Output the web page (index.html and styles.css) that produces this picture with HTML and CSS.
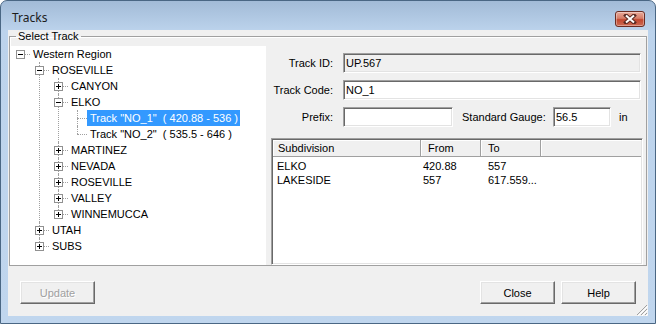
FILE: index.html
```html
<!DOCTYPE html>
<html>
   <head>
      <meta name="viewport" content="width=device-width, initial-scale=1">
      <link rel="stylesheet" href="styles.css">
   </head>
   <body>
      <div class="window">
         <div class="titlebar">
            <span class="title">Tracks</span>
            <span class="closebtn">
               <svg width="14" height="10" viewBox="0 0 14 10">
                  <path d="M3 1.5 L11 8.5 M11 1.5 L3 8.5" stroke="#5a2a22" stroke-width="4" stroke-linecap="square"/>
                  <path d="M3 1.5 L11 8.5 M11 1.5 L3 8.5" stroke="#ffffff" stroke-width="2"/>
               </svg>
            </span>
         </div>
         <div class="client">
            <fieldset class="group">
               <legend>Select Track</legend>
               <div class="group-body">
                  <div class="tree-pane">
                     <ul class="tree">
                        <li>
                           <div class="node"><span class="exp minus"></span><span class="label">Western Region</span></div>
                           <ul>
                              <li>
                                 <div class="node"><span class="exp minus"></span><span class="label">ROSEVILLE</span></div>
                                 <ul>
                                    <li><div class="node"><span class="exp plus"></span><span class="label">CANYON</span></div></li>
                                    <li>
                                       <div class="node"><span class="exp minus"></span><span class="label">ELKO</span></div>
                                       <ul>
                                          <li><div class="node"><span class="exp"></span><span class="label selected">Track "NO_1"  ( 420.88 - 536 )</span></div></li>
                                          <li><div class="node"><span class="exp"></span><span class="label">Track "NO_2"  ( 535.5 - 646 )</span></div></li>
                                       </ul>
                                    </li>
                                    <li><div class="node"><span class="exp plus"></span><span class="label">MARTINEZ</span></div></li>
                                    <li><div class="node"><span class="exp plus"></span><span class="label">NEVADA</span></div></li>
                                    <li><div class="node"><span class="exp plus"></span><span class="label">ROSEVILLE</span></div></li>
                                    <li><div class="node"><span class="exp plus"></span><span class="label">VALLEY</span></div></li>
                                    <li><div class="node"><span class="exp plus"></span><span class="label">WINNEMUCCA</span></div></li>
                                 </ul>
                              </li>
                              <li><div class="node"><span class="exp plus"></span><span class="label">UTAH</span></div></li>
                              <li><div class="node"><span class="exp plus"></span><span class="label">SUBS</span></div></li>
                           </ul>
                        </li>
                     </ul>
                  </div>
                  <div class="detail">
                     <div class="form">
                        <label>Track ID:</label>
                        <input class="field readonly" type="text" value="UP.567" readonly>
                        <label>Track Code:</label>
                        <input class="field" type="text" value="NO_1">
                        <label>Prefix:</label>
                        <div class="inline-row">
                           <input class="field prefix" type="text" value="">
                           <label class="sg-label">Standard Gauge:</label>
                           <input class="field gauge" type="text" value="56.5">
                           <span class="unit">in</span>
                        </div>
                     </div>
                     <div class="listview">
                        <div class="lv-header">
                           <div class="hcell c1">Subdivision</div>
                           <div class="hcell c2">From</div>
                           <div class="hcell c3">To</div>
                           <div class="hcell rest"></div>
                        </div>
                        <div class="lv-rows">
                           <div class="lv-row"><span>ELKO</span><span>420.88</span><span>557</span></div>
                           <div class="lv-row"><span>LAKESIDE</span><span>557</span><span>617.559...</span></div>
                        </div>
                     </div>
                  </div>
               </div>
            </fieldset>
            <div class="footer">
               <button class="btn" disabled>Update</button>
               <span class="spacer"></span>
               <button class="btn">Close</button>
               <button class="btn">Help</button>
            </div>
            <svg class="grip" width="12" height="12" viewBox="0 0 12 12">
               <path d="M11 1 L1 11 M11 5 L5 11 M11 9 L9 11" stroke="#a0a0a0" stroke-width="1"/>
               <path d="M12 2 L2 12 M12 6 L6 12 M12 10 L10 12" stroke="#ffffff" stroke-width="1"/>
            </svg>
         </div>
      </div>
   </body>
</html>
```

FILE: styles.css
```css
body {
margin: 0;
font-family: "Liberation Sans", Arial, sans-serif;
font-size: 11px;
color: #000;
}
.window {
width: 656px;
height: 324px;
box-sizing: border-box;
border: 1px solid #4a6784;
border-radius: 7px 7px 0 0;
background: linear-gradient(#a2bbd7, #bcd3ec 30px, #c0d6ee);
padding: 0 7px 7px 7px;
display: flex;
flex-direction: column;
}
.titlebar {
height: 29px;
display: flex;
align-items: flex-start;
}
.title {
font-family: "Noto Sans", "Liberation Sans", sans-serif;
font-size: 12px;
line-height: 16px;
color: #1b1b1b;
margin: 9px 0 0 4px;
}
.closebtn {
margin: 10px 3px 0 auto;
width: 30px;
height: 16px;
box-sizing: border-box;
border: 1px solid #6b2c22;
border-radius: 3px;
background: linear-gradient(#e9ab9b, #d67d68 45%, #c2472f 55%, #cd6c55);
box-shadow: inset 0 0 0 1px rgba(255,255,255,0.35);
display: flex;
align-items: center;
justify-content: center;
}
.client {
flex: 1;
background: #f0f0f0;
position: relative;
display: flex;
flex-direction: column;
}
.group {
margin: 0 1px;
padding: 4px 3px 0 0;
border: 1px solid #a0a0a0;
box-shadow: inset 1px 1px 0 #fff;
min-width: 0;
}
.group legend {
margin-left: 6px;
padding: 0 2px;
line-height: 12px;
}
.group-body {
display: flex;
height: 219px;
}
.tree-pane {
width: 256px;
background: #fff;
overflow: hidden;
}
/* tree view */
.tree, .tree ul {
list-style: none;
margin: 0;
padding: 0;
}
.tree ul {
padding-left: 19px;
}
.tree li {
position: relative;
}
.tree ul > li::before {
content: "";
position: absolute;
left: 10px;
top: 0;
bottom: 0;
border-left: 1px dotted #a0a0a0;
}
.tree ul > li:last-child::before {
bottom: auto;
height: 8px;
}
.node {
display: flex;
height: 16px;
position: relative;
}
.node::before {
content: "";
position: absolute;
left: 10px;
top: 8px;
width: 10px;
border-top: 1px dotted #a0a0a0;
}
.exp {
width: 20px;
flex: none;
position: relative;
}
.exp.minus::before, .exp.plus::before {
content: "";
position: absolute;
left: 6px;
top: 4px;
width: 9px;
height: 9px;
box-sizing: border-box;
border: 1px solid #919191;
z-index: 1;
}
.exp.minus::before {
background: linear-gradient(#000, #000) center / 5px 1px no-repeat, #fff;
}
.exp.plus::before {
background: linear-gradient(#000, #000) center / 5px 1px no-repeat, linear-gradient(#000, #000) center / 1px 5px no-repeat, #fff;
}
.label {
line-height: 16px;
padding: 0 2px 0 3px;
white-space: pre;
}
.label.selected {
background: #3399ff;
color: #fff;
}
/* right side */
.detail {
flex: 1;
display: flex;
flex-direction: column;
}
.form {
display: grid;
grid-template-columns: 62px 1fr;
column-gap: 10px;
row-gap: 7px;
margin: 7px 0 0 5px;
align-items: center;
}
.form label {
text-align: right;
white-space: nowrap;
}
.form .sg-label {
text-align: left;
flex: none;
width: 81px;
margin: 0 10px 0 9px;
}
.field {
height: 20px;
box-sizing: border-box;
margin: 0 2px 0 0;
padding: 0 2px;
border: 1px solid;
border-color: #a0a0a0 #fff #fff #a0a0a0;
box-shadow: inset 1px 1px 0 #696969, inset -1px -1px 0 #e3e3e3;
background: #fff;
font-family: "Liberation Sans", Arial, sans-serif;
font-size: 11px;
color: #000;
outline: none;
}
.field.readonly {
background: #f0f0f0;
}
.inline-row {
display: flex;
align-items: center;
}
.inline-row .field {
margin: 0;
flex: none;
}
.field.prefix {
width: 110px;
}
.field.gauge {
width: 58px;
}
.unit {
margin-left: 8px;
}
.listview {
flex: 1;
margin: 11px 0 0 5px;
border: 1px solid;
border-color: #a0a0a0 #fff #fff #a0a0a0;
box-shadow: inset 1px 1px 0 #696969, inset -1px -1px 0 #e3e3e3;
padding: 1px;
background: #fff;
}
.lv-header {
display: flex;
height: 17px;
}
.hcell {
box-sizing: border-box;
background: #f0f0f0;
border-right: 1px solid #a0a0a0;
border-bottom: 1px solid #a0a0a0;
box-shadow: inset 1px 1px 0 #fff;
line-height: 16px;
padding-left: 7px;
}
.hcell.c1 {
width: 148px;
padding-left: 5px;
}
.hcell.c2, .hcell.c3 {
width: 60px;
}
.hcell.rest {
flex: 1;
border-right: none;
}
.lv-rows {
padding-top: 2px;
}
.lv-row {
display: grid;
grid-template-columns: 150px 65px auto;
line-height: 14px;
}
.lv-row span:first-child {
padding-left: 4px;
}
/* buttons */
.footer {
display: flex;
padding: 15px 12px 0 12px;
gap: 6px;
}
.spacer {
flex: 1;
}
.btn {
width: 75px;
height: 23px;
box-sizing: border-box;
border: 1px solid;
border-color: #fff #696969 #696969 #fff;
box-shadow: inset -1px -1px 0 #a0a0a0, inset 1px 1px 0 #e3e3e3;
background: #f0f0f0;
font-family: "Liberation Sans", Arial, sans-serif;
font-size: 11px;
color: #000;
padding: 0;
}
.btn:disabled {
color: #a0a0a0;
text-shadow: 1px 1px 0 #fff;
}
.grip {
position: absolute;
right: 0;
bottom: 0;
}
```
